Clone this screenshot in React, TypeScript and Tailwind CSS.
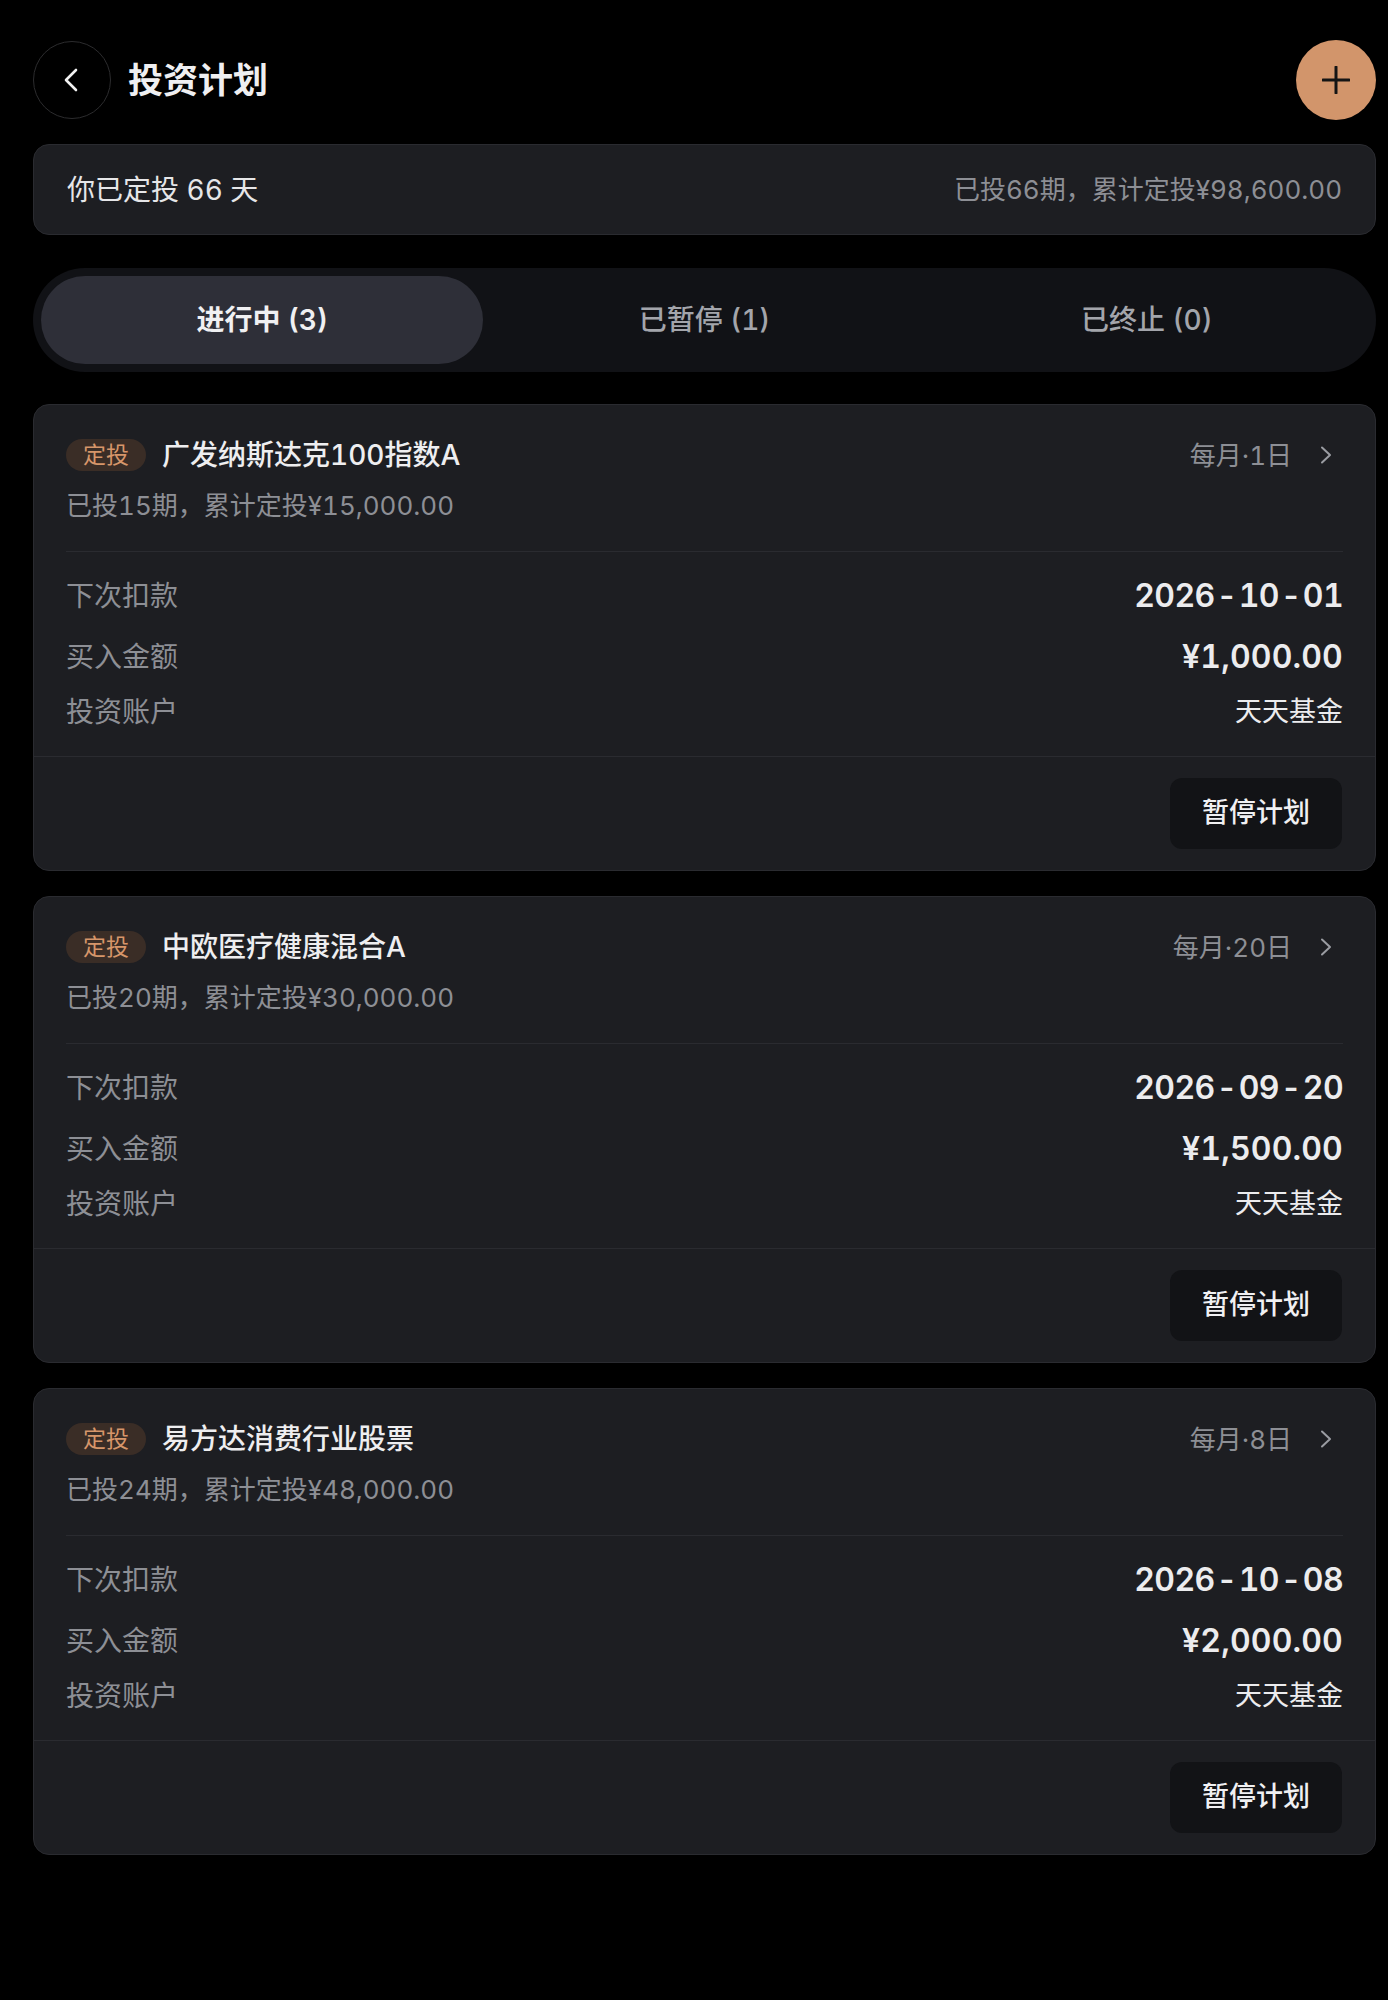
import React from "react";

const plans = [
  {
    id: 1,
    name: "广发纳斯达克100指数A",
    periods: 15,
    total: "15,000.00",
    schedule: "每月·1日",
    nextDate: "2026-10-01",
    amount: "¥1,000.00",
    account: "天天基金",
  },
  {
    id: 2,
    name: "中欧医疗健康混合A",
    periods: 20,
    total: "30,000.00",
    schedule: "每月·20日",
    nextDate: "2026-09-20",
    amount: "¥1,500.00",
    account: "天天基金",
  },
  {
    id: 3,
    name: "易方达消费行业股票",
    periods: 24,
    total: "48,000.00",
    schedule: "每月·8日",
    nextDate: "2026-10-08",
    amount: "¥2,000.00",
    account: "天天基金",
  },
];

const tabs = [
  { id: "active", label: "进行中 (3)" },
  { id: "paused", label: "已暂停 (1)" },
  { id: "stopped", label: "已终止 (0)" },
];

function DateText({ value }: { value: string }) {
  const parts = value.split("-");
  return (
    <span className="tracking-[-0.02em]">
      {parts.map((part, i) => (
        <React.Fragment key={i}>
          {i > 0 && <span className="px-[2px]">-</span>}
          {part}
        </React.Fragment>
      ))}
    </span>
  );
}

function PlanCard({ plan }: { plan: (typeof plans)[number] }) {
  return (
    <div className="rounded-[16px] border border-[#2a2b30] bg-[#1d1e22]">
      <div className="px-[32px] pt-[32px]">
        <div className="flex h-[36px] items-center justify-between">
          <div className="flex items-center">
            <span className="flex h-[32px] items-center rounded-full bg-[#3a2d26] px-[17px] text-[23px] text-[#d6966a]">
              定投
            </span>
            <span className="ml-[16px] text-[28px] font-medium text-[#eeeef0]">
              {plan.name}
            </span>
          </div>
          <div className="flex items-center text-[26px] text-[#8d8f95]">
            <span>{plan.schedule}</span>
            <svg
              className="ml-[22px] mr-[5px] h-[24px] w-[24px]"
              viewBox="0 0 24 24"
              fill="none"
              stroke="#9a9ca2"
              strokeWidth="2"
              strokeLinecap="round"
              strokeLinejoin="round"
            >
              <polyline points="8,4.5 16,12 8,19.5" />
            </svg>
          </div>
        </div>
        <p className="mt-[15px] text-[26px] leading-[36px] text-[#8d8f95]">
          已投{plan.periods}期，累计定投¥{plan.total}
        </p>
        <div className="mt-[27px] h-px bg-[#2a2b30]" />
        <div className="flex flex-col gap-[13px] pb-[26px] pt-[20px]">
          <div className="flex h-[48px] items-center justify-between">
            <span className="text-[28px] text-[#8d8f95]">下次扣款</span>
            <span className="text-[32px] font-semibold text-[#ececee]">
              <DateText value={plan.nextDate} />
            </span>
          </div>
          <div className="flex h-[48px] items-center justify-between">
            <span className="text-[28px] text-[#8d8f95]">买入金额</span>
            <span className="text-[32px] font-semibold tracking-[0.005em] text-[#ececee]">
              {plan.amount}
            </span>
          </div>
          <div className="flex h-[36px] items-center justify-between">
            <span className="text-[28px] text-[#8d8f95]">投资账户</span>
            <span className="text-[27px] text-[#ececee]">{plan.account}</span>
          </div>
        </div>
      </div>
      <div className="flex justify-end border-t border-[#2a2b30] px-[33px] py-[21px]">
        <button className="flex h-[71px] items-center rounded-[12px] bg-[#121316] px-[32px] text-[27px] font-medium text-[#f0f0f2]">
          暂停计划
        </button>
      </div>
    </div>
  );
}

export default function App() {
  const active = "active";

  return (
    <div
      className="min-h-[2000px] bg-black pl-[33px] pr-[12px] pt-[40px] tabular-nums"
      style={{ fontFamily: 'Inter, "Noto Sans CJK SC", sans-serif' }}
    >
      <div className="flex h-[80px] items-center justify-between">
        <div className="flex items-center">
          <button className="flex h-[78px] w-[78px] items-center justify-center rounded-full border-[1.5px] border-[#2c2c2e]">
            <svg
              className="h-[28px] w-[28px]"
              viewBox="0 0 28 28"
              fill="none"
              stroke="#f2f2f2"
              strokeWidth="2.6"
              strokeLinecap="round"
              strokeLinejoin="round"
            >
              <polyline points="18,4 8,14 18,24" />
            </svg>
          </button>
          <h1 className="ml-[17px] text-[35px] font-bold text-[#efeff1]">
            投资计划
          </h1>
        </div>
        <button className="flex h-[80px] w-[80px] items-center justify-center rounded-full bg-[#d2956b]">
          <svg
            className="h-[28px] w-[28px]"
            viewBox="0 0 28 28"
            fill="none"
            stroke="#141414"
            strokeWidth="3"
            strokeLinecap="round"
          >
            <line x1="14" y1="1" x2="14" y2="27" />
            <line x1="1" y1="14" x2="27" y2="14" />
          </svg>
        </button>
      </div>

      <div className="mt-[24px] flex h-[91px] items-center justify-between rounded-[16px] border border-[#2a2b30] bg-[#1d1e22] px-[33px]">
        <span className="text-[28px] text-[#e6e6e8]">你已定投 66 天</span>
        <span className="text-[26px] text-[#8d8f95]">
          已投66期，累计定投¥98,600.00
        </span>
      </div>

      <div className="mt-[33px] grid h-[104px] grid-cols-3 rounded-full bg-[#111216] p-[8px]">
        {tabs.map((tab) => (
          <button
            key={tab.id}
            className={
              tab.id === active
                ? "rounded-full bg-[#2e2f38] text-[28px] font-semibold text-[#f0f0f2]"
                : "rounded-full text-[28px] font-medium text-[#a3a5ab]"
            }
          >
            {tab.label}
          </button>
        ))}
      </div>

      <div className="mt-[32px] flex flex-col gap-[25px]">
        {plans.map((plan) => (
          <PlanCard key={plan.id} plan={plan} />
        ))}
      </div>
    </div>
  );
}
